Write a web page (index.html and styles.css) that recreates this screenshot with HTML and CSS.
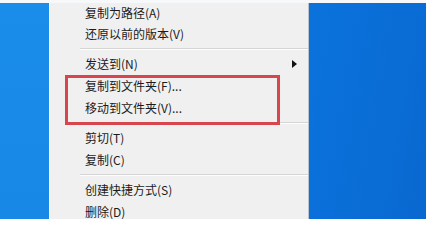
FILE: index.html
```html
<!DOCTYPE html>
<html lang="zh-CN">
<head>
<meta charset="utf-8">
<link rel="stylesheet" href="styles.css">
</head>
<body>
<div class="screen">
  <div class="top-strip"></div>
  <div class="desk">
    <div class="blue-left"></div>
    <div class="menu">
      <div class="item first">复制为路径(A)</div>
      <div class="item">还原以前的版本(V)</div>
      <div class="sep"></div>
      <div class="item sub">发送到(N)<span class="arrow"></span></div>
      <div class="item">复制到文件夹(F)...</div>
      <div class="item">移动到文件夹(V)...</div>
      <div class="sep"></div>
      <div class="item">剪切(T)</div>
      <div class="item">复制(C)</div>
      <div class="sep"></div>
      <div class="item">创建快捷方式(S)</div>
      <div class="item">删除(D)</div>
    </div>
    <div class="blue-right"></div>
  </div>
  <div class="highlight-box"></div>
</div>
</body>
</html>
```

FILE: styles.css
```css
html, body {
  margin: 0;
  padding: 0;
  width: 426px;
  height: 219px;
  overflow: hidden;
}

.screen {
  position: relative;
  width: 426px;
  height: 219px;
  display: flex;
  flex-direction: column;
  font-family: "Noto Sans CJK SC", "Noto Sans", sans-serif;
  font-size: 12px;
  color: #1b1b1b;
}

.top-strip {
  height: 3px;
  background: #f7f8f9;
  flex: none;
}

.desk {
  flex: 1;
  display: flex;
  min-height: 0;
}

.blue-left {
  width: 49px;
  flex: none;
  background: linear-gradient(180deg, #1a8ce9 0%, #1888e6 100%);
}

.menu {
  width: 258px;
  flex: none;
  background: #f0f0f0;
  border-left: 1px solid #fbfbfb;
  border-right: 1px solid #b9c4d0;
  display: flex;
  flex-direction: column;
  overflow: hidden;
}

.item {
  height: 22px;
  line-height: 22px;
  padding-left: 35px;
  flex: none;
  position: relative;
  white-space: nowrap;
}

.item.first {
  height: 20px;
  line-height: 20px;
}

.sub {
  display: flex;
  align-items: center;
}

.arrow {
  margin-left: auto;
  margin-right: 11px;
  width: 0;
  height: 0;
  border-left: 5px solid #111;
  border-top: 4px solid transparent;
  border-bottom: 4px solid transparent;
}

.sep {
  height: 8px;
  flex: none;
  display: flex;
  flex-direction: column;
  justify-content: center;
  padding-left: 30px;
}

.sep::before {
  content: "";
  display: block;
  height: 1px;
  background: #d5d5d5;
  border-bottom: 1px solid #fdfdfd;
}

.blue-right {
  flex: 1;
  background: linear-gradient(100deg, #0b72dc 0%, #0a6dd6 60%, #0968d0 100%);
}

.highlight-box {
  position: absolute;
  left: 65px;
  top: 75px;
  width: 209px;
  height: 44px;
  border: 3px solid #d9454c;
}
```
